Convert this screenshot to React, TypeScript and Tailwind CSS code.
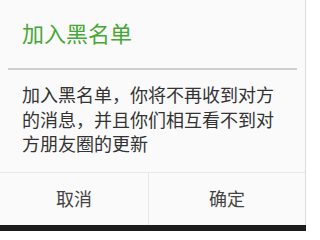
import React from "react";

export default function App() {
  const font = { fontFamily: '"Noto Sans CJK SC", "Noto Sans", sans-serif' };
  return (
    <div className="w-[306px] h-[231px] bg-[#1c1c1c] flex flex-col" style={font}>
      <div className="w-[306px] h-[225px] bg-[#fafafa] border-r border-[#dcdcdc] flex flex-col">
        <div className="h-[68px] flex items-center pl-[22px] pb-[4px] text-[22px] text-[#45a735] leading-none">
          加入黑名单
        </div>
        <div className="mx-[8px] h-[2px] bg-[#cfcfcf]" />
        <div className="pl-[22px] pt-[12px] w-[286px] text-[18px] leading-[24.5px] text-[#333333] flex-1">
          加入黑名单，你将不再收到对方的消息，并且你们相互看不到对方朋友圈的更新
        </div>
        <div className="h-[53px] border-t border-[#e8e8e8] flex text-[18px] text-[#444444]">
          <div className="w-[149px] border-r border-[#e8e8e8] flex items-center justify-center pb-[1px]">取消</div>
          <div className="flex-1 flex items-center justify-center pb-[1px]">确定</div>
        </div>
      </div>
    </div>
  );
}
